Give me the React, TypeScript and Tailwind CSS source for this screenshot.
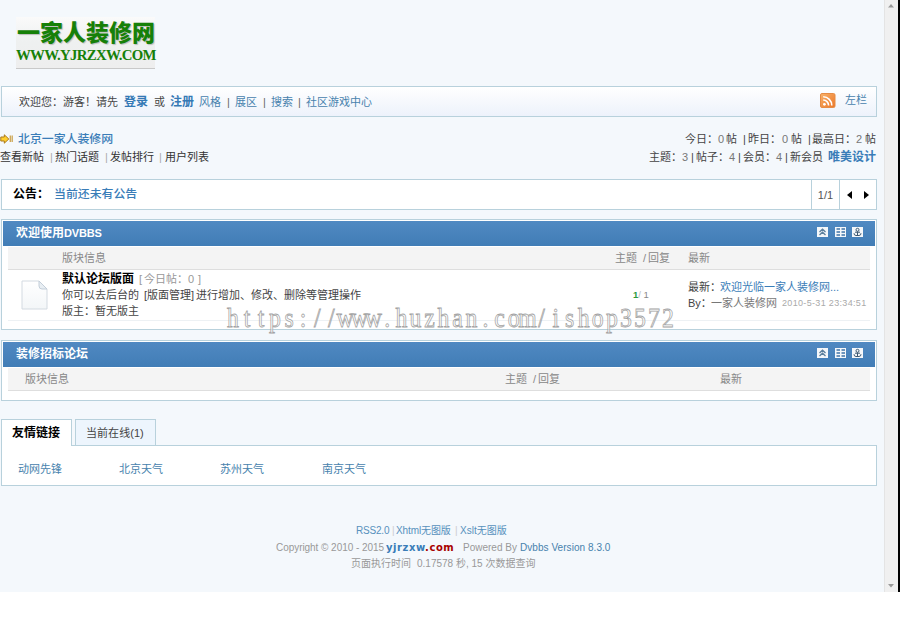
import type { ReactNode } from 'react';

interface BoardProps {
  title: ReactNode;
  children: ReactNode;
}

const WATERMARK = 'https://www.huzhan.com/ishop3572';

function RssIcon() {
  return (
    <svg className="h-4 w-4" viewBox="0 0 16 16">
      <defs>
        <linearGradient id="rss" x1="0" y1="0" x2="1" y2="1">
          <stop offset="0" stopColor="#f8b36b" />
          <stop offset="1" stopColor="#ec7628" />
        </linearGradient>
      </defs>
      <rect x="0.5" y="0.5" width="14.5" height="14" rx="1.5" fill="url(#rss)" stroke="#e58c45" />
      <circle cx="4.4" cy="11.3" r="1.4" fill="#fff" />
      <path d="M3.2 7a5.5 5.5 0 0 1 5.4 5.4M3.2 3.8a8.6 8.6 0 0 1 8.6 8.6" fill="none" stroke="#fff" strokeWidth="1.6" />
    </svg>
  );
}

function ArrowIcon() {
  return (
    <svg className="h-[10px] w-[14px]" viewBox="0 0 14 10">
      <path d="M0.8 3h3.5V0.8L8.8 5 4.3 9.2V7H0.8z" fill="#ffcf2e" stroke="#a9781c" />
      <path d="M10.3 1.5v6.5M12.2 1.5v6.5" stroke="#cfa95a" strokeWidth="1.4" />
    </svg>
  );
}

function PageIcon() {
  return (
    <svg className="h-[30px] w-[27px]" viewBox="0 0 27 30">
      <defs>
        <linearGradient id="page" x1="0" y1="0" x2="0" y2="1">
          <stop offset="0" stopColor="#ffffff" />
          <stop offset="1" stopColor="#f3f6f8" />
        </linearGradient>
      </defs>
      <path d="M1 1h17l8 8v20H1z" fill="url(#page)" stroke="#d3dae1" />
      <path d="M18 1v5q0 3 3 3h5z" fill="#e8eef3" stroke="#c3ced9" />
    </svg>
  );
}

function BoardTools() {
  return (
    <div className="flex gap-[6.5px]">
      <svg className="h-[10px] w-[11px]" viewBox="0 0 11 10">
        <rect width="11" height="10" fill="#f4f7fa" />
        <path d="M2.5 5l3-2.8 3 2.8M2.5 8l3-2.8 3 2.8" fill="none" stroke="#5b7f9d" strokeWidth="1.3" />
      </svg>
      <svg className="h-[10px] w-[11px]" viewBox="0 0 11 10">
        <rect width="11" height="10" fill="#f4f7fa" />
        <path d="M1.5 2h3.5M6.5 2H10M1.5 5h3.5M6.5 5H10M1.5 8h3.5M6.5 8H10" stroke="#3f74a8" strokeWidth="1.6" />
      </svg>
      <svg className="h-[10px] w-[11px]" viewBox="0 0 11 10">
        <rect width="11" height="10" fill="#f4f7fa" />
        <circle cx="5.5" cy="2.8" r="1.5" fill="none" stroke="#3e5972" />
        <path d="M3 5.2h5M5.5 4.5V8M2 6.2q0 2.3 2 2.3h3q2 0 2-2.3" fill="none" stroke="#3e5972" />
      </svg>
    </div>
  );
}

function Board({ title, children }: BoardProps) {
  return (
    <section className="ml-px w-[876px] border border-[#b8d1dc] bg-white p-px">
      <div className="flex h-[25px] items-center justify-between bg-linear-to-b from-[#5089c2] to-[#417db6] pr-3 pl-[13px]">
        <h2 className="-mt-px text-[12px] font-bold text-white">{title}</h2>
        <div className="-mt-[3px]">
          <BoardTools />
        </div>
      </div>
      {children}
    </section>
  );
}

function Watermark() {
  // one fixed-pitch cell per glyph
  const xs = WATERMARK.split('').map((_, i) => ((11 + i * 14.03) / 0.88).toFixed(1));

  return (
    <svg className="pointer-events-none absolute top-[300px] left-[222px] h-[38px] w-[456px]" viewBox="0 0 456 38">
      <text
        x={xs.join(' ')}
        y="26"
        transform="scale(0.88 1.04)"
        textAnchor="middle"
        fill="#ffffff"
        fillOpacity="0.55"
        stroke="#a3a3a3"
        strokeWidth="0.8"
        className="font-['Liberation_Serif',serif] text-[27px]"
      >
        {WATERMARK}
      </text>
    </svg>
  );
}

export default function App() {
  return (
    <div className="relative h-[633px] w-[900px] overflow-hidden bg-white font-['Liberation_Sans','Noto_Sans_CJK_SC',sans-serif] text-[11px] leading-4 whitespace-nowrap text-[#444]">
      <div className="flex h-[592px]">
        <main className="w-[884px] bg-[#f4f8fc]">
          <header className="h-[86px] pt-[17px] pl-4">
            <div className="h-[52px] w-[139px] border-b border-[#c9c9c9] bg-linear-to-b from-[#fafafa] via-[#eef0f0] to-[#eeeeee] pt-[3px] text-[#168008]">
              <div className="pl-[1px] text-[23px] leading-[27px] font-black [text-shadow:1px_1px_1px_#bbb]">一家人装修网</div>
              <div className="font-['Liberation_Serif',serif] text-[14.8px] leading-[17px] font-bold tracking-[-0.68px]">WWW.YJRZXW.COM</div>
            </div>
          </header>

          {/* Visitor bar */}
          <nav className="ml-px flex h-[31px] w-[876px] items-center border border-[#b8d1dc] bg-linear-to-b from-white to-[#edf2fb] pl-[17px] text-[#4782ad]">
            <span className="w-[105px] text-[#444]">欢迎您：游客！请先</span>
            <a className="w-[30px] text-[12px] font-bold text-[#3579b5]">登录</a>
            <span className="w-4 text-[#444]">或</span>
            <a className="w-[29px] text-[12px] font-bold text-[#3579b5]">注册</a>
            <a className="w-[28px]">风格</a>
            <span className="w-2 text-[#666]">|</span>
            <a className="w-[28px]">展区</a>
            <span className="w-2 text-[#666]">|</span>
            <a className="w-[27px]">搜索</a>
            <span className="w-2 text-[#666]">|</span>
            <a>社区游戏中心</a>
            <div className="mr-[9px] ml-auto flex items-center gap-[9px]">
              <div className="-mt-px">
                <RssIcon />
              </div>
              <a className="-mt-[3px]">左栏</a>
            </div>
          </nav>

          {/* Breadcrumb and forum totals */}
          <div className="flex h-[62px] w-[877px] justify-between pt-[13px] leading-[18px]">
            <div>
              <div className="flex items-center gap-1 text-[11.9px] font-medium text-[#3a7db8]">
                <ArrowIcon />
                <a>北京一家人装修网</a>
              </div>
              <div className="flex text-[#333]">
                <a className="w-[50px]">查看新帖</a>
                <span className="w-[5px] text-[#aaa]">|</span>
                <a className="w-[50px]">热门话题</a>
                <span className="w-[5px] text-[#aaa]">|</span>
                <a className="w-[49px]">发帖排行</a>
                <span className="w-[6px] text-[#aaa]">|</span>
                <a>用户列表</a>
              </div>
            </div>
            <div>
              <div className="flex justify-end">
                <span className="w-[33px]">今日：</span>
                <span className="w-2 text-[#777]">0</span>
                <span className="w-[17px]">帖</span>
                <span className="w-[5px]">|</span>
                <span className="w-[34px]">昨日：</span>
                <span className="w-[9px] text-[#777]">0</span>
                <span className="w-[17px]">帖</span>
                <span className="w-[4px]">|</span>
                <span className="w-[44px]">最高日：</span>
                <span className="w-[9px] text-[#777]">2</span>
                <span className="w-[12px]">帖</span>
              </div>
              <div className="flex justify-end">
                <span className="w-[33px]">主题：</span>
                <span className="w-[9px] text-[#777]">3</span>
                <span className="w-[5px]">|</span>
                <span className="w-[33px]">帖子：</span>
                <span className="w-[9px] text-[#777]">4</span>
                <span className="w-[5px]">|</span>
                <span className="w-[33px]">会员：</span>
                <span className="w-[9px] text-[#777]">4</span>
                <span className="w-[5px]">|</span>
                <span className="w-[38px]">新会员</span>
                <a className="w-[49px] text-[12px] font-bold text-[#3a7db8]">唯美设计</a>
              </div>
            </div>
          </div>

          {/* Announcement */}
          <div className="ml-px flex h-[31px] w-[876px] items-center border border-[#b8d1dc] bg-white pl-[11px]">
            <span className="-mt-px w-[41px] text-[12px] font-bold text-black">公告：</span>
            <a className="-mt-px text-[11.9px] font-medium text-[#3a7db8]">当前还未有公告</a>
            <div className="ml-auto flex h-full w-[28px] items-center justify-center border-l border-[#b8d1dc] text-[#555]">1/1</div>
            <div className="flex h-full w-[37px] items-center gap-3 border-l border-[#b8d1dc] pl-[7px]">
              <svg className="h-2 w-[5px]" viewBox="0 0 5 8">
                <path d="M5 0v8L0 4z" />
              </svg>
              <svg className="h-2 w-[5px]" viewBox="0 0 5 8">
                <path d="M0 0v8l5-4z" />
              </svg>
            </div>
          </div>

          <div className="mt-[9px]">
            <Board
              title={
                <>
                  欢迎使用<span className="text-[11px] tracking-[-0.2px]">DVBBS</span>
                </>
              }
            >
              <div className="mx-[5px] mt-px flex h-[23px] items-center border-b border-[#dedede] bg-[#f4f4f4] pl-[54px] text-[#888]">
                <span className="w-[553px]">版块信息</span>
                <span className="w-[28px]">主题</span>
                <span className="w-[5px]">/</span>
                <span className="w-[40px]">回复</span>
                <span>最新</span>
              </div>
              <div className="mx-[5px] mb-[7px] flex h-[51px] border-b border-[#edf1f4]">
                <div className="w-[54px] pt-[10px] pl-[13px]">
                  <PageIcon />
                </div>
                <div className="w-[571px] pt-px">
                  <div className="flex h-4 items-center">
                    <b className="w-[77px] text-[12px] text-black">默认论坛版面</b>
                    <span className="w-1 text-[#999]">[</span>
                    <span className="ml-px w-[44px] text-[#999]">今日帖：</span>
                    <span className="w-[10px] text-[#999]">0</span>
                    <span className="text-[#999]">]</span>
                  </div>
                  <div className="flex h-4 items-center">
                    <span className="w-[82px]">你可以去后台的</span>
                    <span className="w-[52px]">[版面管理]</span>
                    <span>进行增加、修改、删除等管理操作</span>
                  </div>
                  <div className="flex h-4 items-center">版主：暂无版主</div>
                </div>
                <div className="w-[55px] pt-[17px] text-[9.5px] text-[#bbb]">
                  <b className="text-[#2c9a3c]">1</b>/ <span className="text-[#888]">1</span>
                </div>
                <div className="pt-[9px]">
                  <div className="flex">
                    <span className="w-[32px]">最新：</span>
                    <a className="text-[#3a7db8]">欢迎光临一家人装修网...</a>
                  </div>
                  <div className="flex items-center">
                    <span className="w-[23px]">By：</span>
                    <span className="w-[71px] text-[#777]">一家人装修网</span>
                    <span className="text-[9px] tracking-[0.33px] text-[#aaa]">2010-5-31 23:34:51</span>
                  </div>
                </div>
              </div>
            </Board>
          </div>

          <div className="mt-[10px]">
            <Board title="装修招标论坛">
              <div className="mx-[5px] mt-px mb-[8px] flex h-[23px] items-center border-b border-[#dedede] bg-[#f4f4f4] pl-[17px] text-[#888]">
                <span className="w-[480px]">版块信息</span>
                <span className="w-[28px]">主题</span>
                <span className="w-[5px]">/</span>
                <span className="w-[182px]">回复</span>
                <span>最新</span>
              </div>
            </Board>
          </div>

          {/* Links */}
          <div className="mt-[18px] ml-px w-[876px]">
            <div className="flex h-[26px]">
              <div className="relative z-10 h-[27px] w-[71px] border border-b-0 border-[#b8d1dc] bg-white pt-[5px] pl-[10px] text-[12px] font-bold text-black">友情链接</div>
              <div className="ml-[3px] w-[81px] border border-b-0 border-[#b8d1dc] bg-[#edf5fd] pt-[5px] pl-[10px] tracking-[0.05px]">当前在线(1)</div>
            </div>
            <div className="flex h-[41px] items-center border border-[#b8d1dc] bg-white pt-[6px] pl-4 text-[#4782ad]">
              <a className="w-[101px]">动网先锋</a>
              <a className="w-[101px]">北京天气</a>
              <a className="w-[102px]">苏州天气</a>
              <a>南京天气</a>
            </div>
          </div>

          <footer className="pt-[37px] text-[10px] leading-[16.5px] text-[#999]">
            <div className="flex pl-[356px] text-[#5791bc]">
              <a className="w-[36px] tracking-[-0.2px]">RSS2.0</a>
              <span className="w-1 text-[#ccc]">|</span>
              <a className="w-[59px] tracking-[-0.1px]">Xhtml无图版</a>
              <span className="w-[5px] text-[#ccc]">|</span>
              <a>Xslt无图版</a>
            </div>
            <div className="flex pl-[276px]">
              <span className="w-[110px] tracking-[-0.05px]">Copyright © 2010 - 2015</span>
              <span className="w-[77px] font-['DejaVu_Sans',sans-serif] font-bold tracking-[0.55px] text-[#3a7db8]">
                yjrzxw<span className="text-[#a80000]">.com</span>
              </span>
              <span className="w-[57px]">Powered By</span>
              <a className="tracking-[0.05px] text-[#4782ad]">Dvbbs Version 8.3.0</a>
            </div>
            <div className="flex pl-[351px]">
              <span className="w-[66px]">页面执行时间</span>
              <span>0.17578 秒, 15 次数据查询</span>
            </div>
          </footer>
        </main>

        {/* Window scrollbar */}
        <aside className="flex w-[14px] flex-col justify-between border-l border-[#e4e4e4] bg-[#f0f0f0]">
          <svg className="h-3 w-3" viewBox="0 0 12 12">
            <path d="M3 7.5L6 4l3 3.5z" fill="#9a9a9a" />
          </svg>
          <svg className="h-3 w-3" viewBox="0 0 12 12">
            <path d="M3 4l3 3.5L9 4z" fill="#9a9a9a" />
          </svg>
        </aside>
        <div className="w-[2px] bg-black" />
      </div>
      <Watermark />
    </div>
  );
}
